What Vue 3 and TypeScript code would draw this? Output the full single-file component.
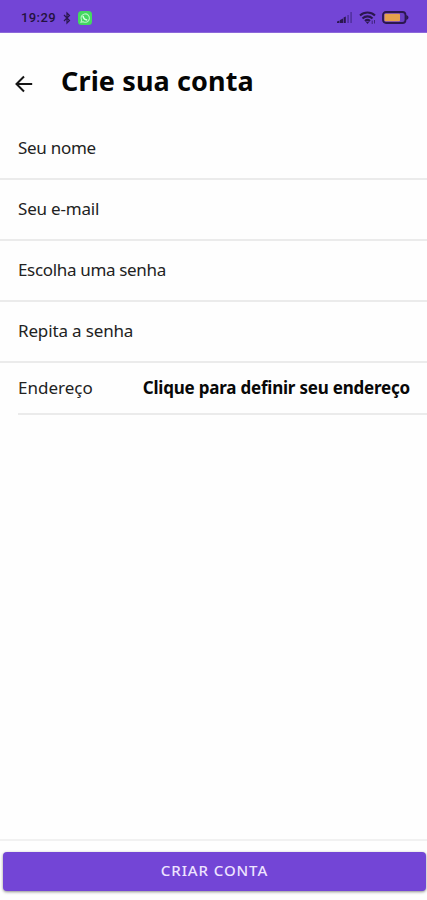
<script setup lang="ts">
interface Field {
  id: string
  label: string
}

const fields: Field[] = [
  { id: 'name', label: 'Seu nome' },
  { id: 'email', label: 'Seu e-mail' },
  { id: 'password', label: 'Escolha uma senha' },
  { id: 'repeat', label: 'Repita a senha' },
]
</script>

<template>
  <div class="screen">
    <div class="status">
      <span class="time">19:29</span>
      <svg class="bluetooth" width="8" height="14" viewBox="0 0 8 14">
        <path d="M1 4 6.5 9.5 4 12V2l2.5 2.5L1 10" />
      </svg>
      <svg class="chat" width="14" height="14" viewBox="0 0 14 14">
        <rect width="14" height="14" rx="3.5" fill="#43d860" />
        <path d="M3 11.2l.6-2A4.2 4.2 0 1 1 5.1 10.7z" fill="none" stroke="#b5f5c2" stroke-width="1.1" />
        <path d="M5 4.8c.3 2 2.2 4 4.2 4.2" fill="none" stroke="#d8ffe0" stroke-width="1.4" />
      </svg>
      <span class="spacer"></span>
      <svg class="signal" width="17" height="13" viewBox="0 0 17 13">
        <path d="M1 12v-1.5l2.500-1V12zM4 12V9l3-1.500V12zM7.600 12V6.500l2.200-1V12z" fill="#2b174f" />
        <path d="M11.3 12V4h1.6v8zM14.3 12V1h1.6v11z" fill="#5130a0" />
      </svg>
      <svg class="wifi" width="18" height="14" viewBox="0 0 18 14">
        <g fill="none" stroke="#2b174f" stroke-width="2.1">
          <path d="M1 4.5a11 11 0 0 1 15 0" />
          <path d="M3.5 7.4a7.2 7.2 0 0 1 10 0" />
          <path d="M6 10a3.7 3.7 0 0 1 5 0" />
        </g>
        <path d="M6.7 10.8h3.6L8.5 13z" fill="#2b174f" />
        <path d="M13.2 9.5V13M15.5 9v3.5" stroke="#40247c" />
      </svg>
      <svg class="battery" width="27" height="13" viewBox="0 0 27 13">
        <rect x="1" y="1" width="22.5" height="11" rx="3" fill="#6a3fc4" stroke="#2b174f" stroke-width="1.8" />
        <rect x="2.5" y="2.7" width="15.5" height="7.6" rx="1" fill="#e5a04d" />
        <path d="M24.2 4c3 .7 3 4.3 0 5z" fill="#2b174f" />
      </svg>
    </div>

    <header class="header">
      <svg width="18" height="18" viewBox="0 0 18 18">
        <path d="M17.2 9H1.8M9 1.5 1.5 9 9 16.5" />
      </svg>
      <h1>Crie sua conta</h1>
    </header>

    <main class="form">
      <div v-for="field in fields" :key="field.id" class="field">
        <span :class="field.id">{{ field.label }}</span>
      </div>
      <div class="address">
        <span>Endereço</span>
        <strong>Clique para definir seu endereço</strong>
      </div>
    </main>

    <footer class="footer">
      <button type="button">CRIAR CONTA</button>
    </footer>
  </div>
</template>

<style>
body {
  background: #fff;
}
</style>

<style scoped>
.screen {
  display: flex;
  flex-direction: column;
  width: 100%;
  height: 900px;
  overflow: hidden;
  background: #fefefe;
  color: #222;
  font-family: "Noto Sans", sans-serif;
}

.status {
  display: flex;
  align-items: center;
  box-sizing: border-box;
  flex: none;
  height: 33px;
  padding: 4px 18px 1px 21px;
  border-bottom: 1px solid #8c68da;
  background: #7345d6;
}

.time {
  width: 35px;
  padding-top: 1px;
  color: #24123f;
  font: 500 13px/16px Roboto, sans-serif;
  letter-spacing: 0.4px;
  white-space: nowrap;
}

.bluetooth {
  margin-left: 7px;
  fill: none;
  stroke: #2b174f;
  stroke-width: 1.2;
}

.chat {
  margin-left: 7px;
}

.spacer {
  flex: 1;
}

.wifi {
  margin-left: 6px;
}

.battery {
  margin-left: 5px;
}

.header {
  display: flex;
  align-items: center;
  box-sizing: border-box;
  flex: none;
  height: 86px;
  padding: 0 15px;
}

.header svg {
  flex: none;
  margin-top: 15px;
  fill: none;
  stroke: #151515;
  stroke-width: 2;
}

h1 {
  margin: 9px 0 0 28px;
  color: #050505;
  font-size: 27px;
  font-weight: 700;
  letter-spacing: 0.12px;
  line-height: 36px;
  white-space: nowrap;
}

.form {
  flex: 1;
  font-size: 17px;
  line-height: 24px;
  white-space: nowrap;
}

.field {
  display: flex;
  align-items: center;
  box-sizing: border-box;
  height: 61px;
  padding: 0 18px 2px;
  border-bottom: 2px solid #ebebeb;
}

.name {
  letter-spacing: -0.28px;
}

.email {
  letter-spacing: -0.2px;
}

.password {
  letter-spacing: -0.33px;
}

.repeat {
  letter-spacing: -0.15px;
}

.address {
  display: flex;
  align-items: center;
  justify-content: space-between;
  box-sizing: border-box;
  height: 52px;
  margin-left: 18px;
  padding-right: 17px;
  border-bottom: 2px solid #ebebeb;
}

.address strong {
  color: #080808;
  font-weight: 700;
  letter-spacing: -0.21px;
}

.footer {
  box-sizing: border-box;
  flex: none;
  height: 61px;
  padding: 11px 1px 9px 3px;
  border-top: 2px solid #f1f1f1;
}

button {
  display: block;
  width: 100%;
  height: 39px;
  padding: 0 0 2px;
  border: 0;
  border-radius: 4px;
  background: #7345d6;
  box-shadow: 0 1px 3px rgba(0, 0, 0, 0.45);
  color: #eee3ff;
  font: 500 15px/37px "Noto Sans", sans-serif;
  letter-spacing: 0.9px;
}
</style>
